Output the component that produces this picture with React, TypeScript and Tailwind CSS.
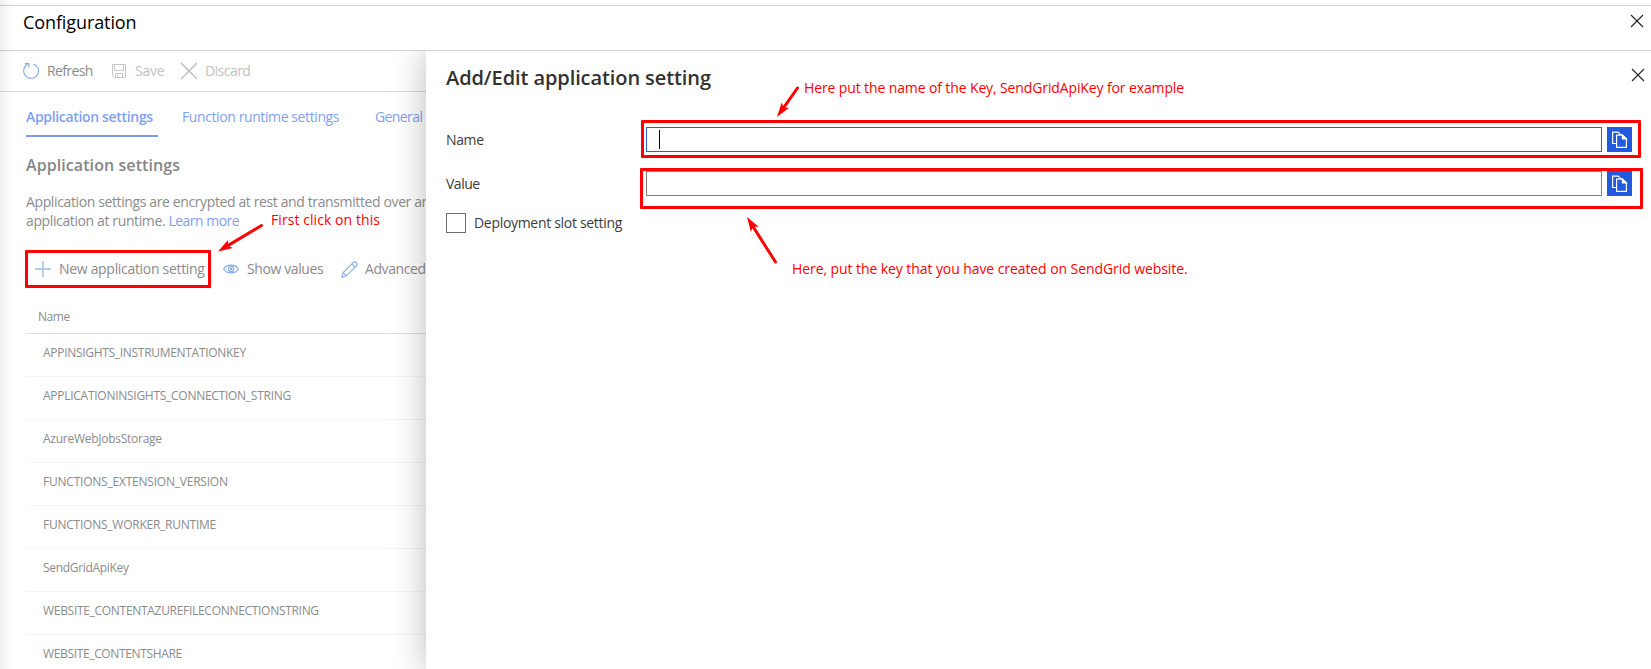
import React from "react";

const rows = [
  { name: "APPINSIGHTS_INSTRUMENTATIONKEY", tracking: "tracking-[-0.3px]" },
  { name: "APPLICATIONINSIGHTS_CONNECTION_STRING", tracking: "tracking-[-0.27px]" },
  { name: "AzureWebJobsStorage", tracking: "tracking-[-0.26px]" },
  { name: "FUNCTIONS_EXTENSION_VERSION", tracking: "tracking-[-0.22px]" },
  { name: "FUNCTIONS_WORKER_RUNTIME", tracking: "tracking-[-0.24px]" },
  { name: "SendGridApiKey", tracking: "tracking-[-0.32px]" },
  { name: "WEBSITE_CONTENTAZUREFILECONNECTIONSTRING", tracking: "tracking-[-0.3px]" },
  { name: "WEBSITE_CONTENTSHARE", tracking: "tracking-[-0.35px]" },
];

function CloseIcon({ className }: { className: string }) {
  return (
    <svg className={className} width="14" height="14" viewBox="0 0 14 14" fill="none" stroke="#222" strokeWidth="1.1">
      <path d="M1 1 13 13M13 1 1 13" />
    </svg>
  );
}

function RefreshIcon() {
  return (
    <svg className="shrink-0" width="16" height="16" viewBox="0 0 16 16" fill="none" stroke="#86ace8" strokeWidth="1.1">
      <path d="M10.3.9A7.4 7.4 0 1 1 4.6 1.4" />
      <path d="M1.9.6h4v4.2" />
    </svg>
  );
}

function SaveIcon() {
  return (
    <svg className="shrink-0" width="14" height="14" viewBox="0 0 14 14" fill="none" stroke="#c6c6c6">
      <path d="M.5.5h13v13H2.5l-2-2z" />
      <path d="M2.5.5v6h9v-6M3.5 13.5v-4h7v4M5.5 11v2.5" />
    </svg>
  );
}

function CopyButton() {
  return (
    <button className="flex h-[25px] w-[25px] shrink-0 items-center justify-center bg-[#2359dd]">
      <svg width="17" height="17" viewBox="0 0 17 17" fill="none" stroke="#fff" strokeWidth="1.2">
        <path d="M5 12.5H1.6V1.1h5.5l3 3" />
        <path d="M5.6 4.1h6l3.8 3.9v8.4H5.6z" />
        <path d="M11.4 4.1V8h4z" fill="#fff" />
      </svg>
    </button>
  );
}

function Arrow({ x1, y1, x2, y2 }: { x1: number; y1: number; x2: number; y2: number }) {
  const len = Math.hypot(x2 - x1, y2 - y1);
  const ux = (x2 - x1) / len;
  const uy = (y2 - y1) / len;
  const point = (along: number, side: number) =>
    `${x2 - ux * along - uy * side},${y2 - uy * along + ux * side}`;
  return (
    <g>
      <line x1={x1} y1={y1} x2={x2 - ux * 10} y2={y2 - uy * 10} stroke="#f00" strokeWidth="3" strokeLinecap="round" />
      <polygon points={`${x2},${y2} ${point(14.5, 4.6)} ${point(11.5, 0)} ${point(14.5, -4.6)}`} fill="#f00" />
    </g>
  );
}

function SettingsPage() {
  return (
    <section className="h-full w-[426px] shrink-0 overflow-hidden whitespace-nowrap text-[14px] leading-5 text-[#8b8b8b]">
      <div className="flex h-[41px] items-center border-b border-[#dcdcdc] pl-[23px]">
        <RefreshIcon />
        <span className="ml-[8px] w-[65px] tracking-[-0.62px]">Refresh</span>
        <SaveIcon />
        <span className="ml-[9px] w-[45px] tracking-[-0.25px] text-[#c2c2c2]">Save</span>
        <svg className="shrink-0" width="18" height="18" viewBox="0 0 18 18" stroke="#bdbdbd" strokeWidth="1.4">
          <path d="M1 1 17 17M17 1 1 17" />
        </svg>
        <span className="ml-[7px] tracking-[-0.54px] text-[#c2c2c2]">Discard</span>
      </div>

      <nav className="flex pt-[15px] pl-[26px] text-[#819ff0]">
        <span className="h-[30px] w-[132px] shrink-0 border-b-2 border-[#7c9aee] font-semibold tracking-[-0.33px]">
          Application settings
        </span>
        <span className="ml-[24px] w-[193px] shrink-0 tracking-[-0.4px]">Function runtime settings</span>
        <span className="tracking-[-0.6px]">General</span>
      </nav>

      <h2 className="mt-[18px] pl-[26px] text-[16px] font-semibold tracking-[0.08px] text-[#868686]">
        Application settings
      </h2>
      <p className="mt-[17px] pl-[26px] leading-[19px] tracking-[-0.38px]">
        Application settings are encrypted at rest and transmitted over an encrypted channel.
        <br />
        <span className="tracking-[-0.38px]">application at runtime. </span>
        <span className="tracking-[-0.52px] text-[#7f9ef1]">Learn more</span>
      </p>

      <div className="mt-[29px] flex h-5 items-center pl-[35px]">
        <svg className="shrink-0" width="16" height="16" viewBox="0 0 16 16" stroke="#9dbfe6" strokeWidth="1.4">
          <path d="M8 0v16M0 8h16" />
        </svg>
        <span className="ml-[8px] w-[164px] shrink-0 tracking-[-0.31px]">New application setting</span>
        <svg className="shrink-0" width="16" height="10" viewBox="0 0 16 10" fill="none" stroke="#86ace8" strokeWidth="1.2">
          <path d="M.7 5C3.5-.2 12.5-.2 15.3 5 12.5 10.2 3.5 10.2.7 5z" />
          <circle cx="8" cy="5" r="2.6" />
          <circle cx="8" cy="5" r=".6" />
        </svg>
        <span className="ml-[8px] w-[94px] shrink-0 tracking-[-0.4px]">Show values</span>
        <svg className="shrink-0" width="17" height="17" viewBox="0 0 17 17" fill="none" stroke="#86ace8" strokeWidth="1.1">
          <path d="M.8 16.2 2.2 11.6 12.1 1.7Q13.7.2 15.3 1.7 16.8 3.3 15.3 4.9L5.4 14.8z" />
          <path d="M2.2 11.6 5.4 14.8M10.9 2.9 14.1 6.1" />
        </svg>
        <span className="ml-[7px] shrink-0 tracking-[-0.4px]">Advanced</span>
      </div>

      <div className="mt-[23px] ml-[26px] text-[12px]">
        <div className="h-[32px] border-b border-[#dcdee2] pt-[5px] pl-[12px] tracking-[-0.45px]">Name</div>
        {rows.map((row) => (
          <div key={row.name} className="h-[43px] border-b border-[#f4f4f4] pt-[9px] pl-[17px]">
            <span className={row.tracking}>{row.name}</span>
          </div>
        ))}
      </div>
    </section>
  );
}

function EditPanel() {
  return (
    <section className="relative h-full min-w-0 flex-1 bg-white pr-[7px] pl-[20px] text-[14px] leading-5 text-[#3c3c3c] shadow-[0_0_32px_rgba(0,0,0,0.27)]">
      <div className="flex h-[36px] justify-between">
        <h2 className="pt-[17px] text-[20px] font-semibold tracking-[-0.09px] text-[#323232]">
          Add/Edit application setting
        </h2>
        <CloseIcon className="mt-[17px] mr-[-1px]" />
      </div>
      <div className="mt-[40px] flex h-[25px]">
        <label className="w-[200px] pt-[3px] tracking-[-0.35px]">Name</label>
        <div className="mr-[5px] flex-1 border border-[#2a62d0] pt-[2px] pl-[12px]">
          <div className="h-[19px] w-px bg-black" />
        </div>
        <div className="mr-[12px] flex">
          <CopyButton />
        </div>
      </div>
      <div className="mt-[19px] flex h-[25px]">
        <label className="w-[200px] pt-[3px] tracking-[-0.5px]">Value</label>
        <div className="mr-[5px] flex-1 border border-[#808080]" />
        <div className="mr-[12px] flex">
          <CopyButton />
        </div>
      </div>
      <div className="mt-[17px] flex h-5 items-center">
        <div className="h-5 w-5 border border-[#6e6e6e]" />
        <span className="ml-[8px] tracking-[-0.31px]">Deployment slot setting</span>
      </div>
    </section>
  );
}

function Annotations() {
  return (
    <div className="pointer-events-none absolute inset-0 text-[14px] leading-5 whitespace-nowrap text-[#f00]">
      <div className="absolute top-[250px] left-[25px] h-[38px] w-[186px] rounded-[1px] border-3 border-[#f00]" />
      <div className="absolute top-[120px] left-[641px] h-[38px] w-[1000px] rounded-[1px] border-3 border-[#f00]" />
      <div className="absolute top-[168px] left-[640px] h-[41px] w-[1003px] rounded-[1px] border-3 border-[#f00]" />
      <span className="absolute top-[210px] left-[271px] tracking-[0.07px]">First click on this</span>
      <span className="absolute top-[78px] left-[804px] tracking-[-0.12px]">
        Here put the name of the Key, SendGridApiKey for example
      </span>
      <span className="absolute top-[259px] left-[792px] tracking-[-0.08px]">
        Here, put the key that you have created on SendGrid website.
      </span>
      <svg className="absolute inset-0" width="1651" height="669">
        <Arrow x1={261.5} y1={225.5} x2={218} y2={251.5} />
        <Arrow x1={797.5} y1={88} x2={777} y2={117} />
        <Arrow x1={775.5} y1={262} x2={747} y2={217} />
      </svg>
    </div>
  );
}

export default function App() {
  return (
    <div className="relative flex h-[669px] w-[1651px] flex-col overflow-hidden bg-white pt-[5px] font-['Open_Sans',sans-serif]">
      <header className="flex h-[46px] shrink-0 justify-between border-y border-[#d2d2d2] pr-[7px] pl-[23px]">
        <h1 className="pt-[6px] text-[18px] leading-5 font-medium tracking-[-0.1px] text-black">Configuration</h1>
        <CloseIcon className="mt-[8px]" />
      </header>
      <main className="flex min-h-0 flex-1 overflow-hidden">
        <SettingsPage />
        <EditPanel />
      </main>
      <div className="pointer-events-none absolute inset-y-0 left-0 w-[14px] bg-linear-to-r from-black/[0.06] to-black/0" />
      <Annotations />
    </div>
  );
}
